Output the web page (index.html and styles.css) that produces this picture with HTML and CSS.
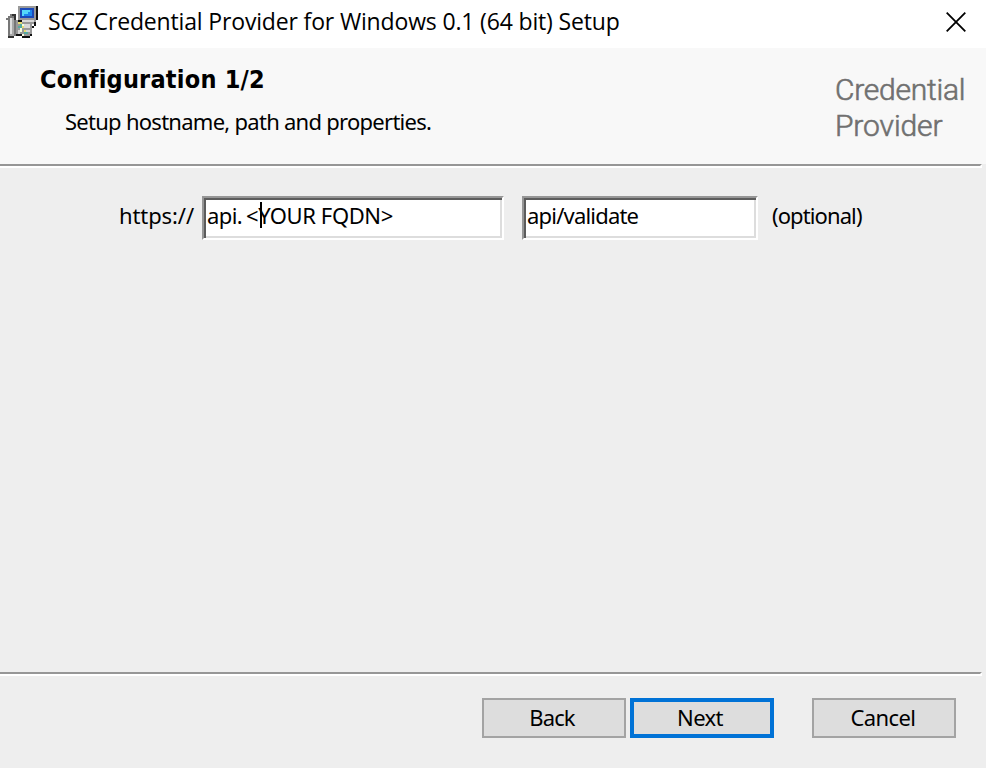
FILE: index.html
```html
<!DOCTYPE html>
<html lang="en">
<head>
<meta charset="utf-8">
<title>SCZ Credential Provider Setup</title>
<link rel="stylesheet" href="styles.css">
</head>
<body>
<div class="window">
  <div class="titlebar">
    <svg class="app-icon" width="32" height="32" viewBox="0 0 16 16" shape-rendering="crispEdges">
      <path fill="#777" d="M0 6h1v1H0zM1 5h4v1H1zM2 4h3v1H2zM1 6h1v9H1z"/>
      <path fill="#a8a8a8" d="M2 6h2v9H2z"/>
      <path fill="#ddd" d="M2 6h1v8H2z"/>
      <path fill="#333" d="M4 5h1v2H4zM1 15h3v1H1zM3 4h2v1H3z"/>
      <path fill="#777" d="M4 7h1v8H4z"/>
      <path fill="#999" d="M5 7h10v2H5zM5 9h8v5H5zM6 14h6v1H6z"/>
      <path fill="#d8d8d8" d="M8 7h6v1H8zM9 9h3v2H9zM6 12h1v2H6zM10 12h2v1h-2z"/>
      <path fill="#999" d="M6 0h9v7H6z"/>
      <path fill="#111" d="M15 0h1v7h-1zM6 7h2v1H6zM14 8h1v2h-1zM13 10h1v1h-1zM12 14h1v1h-1zM8 15h4v1H8zM5 14h3v1H5z"/>
      <path fill="#1c49b8" d="M7 1h7v5H7z"/>
      <path fill="#1c86ee" d="M8 2h5v3H8z"/>
      <path fill="#55d9fa" d="M8 2h4v1H8zM8 3h3v1H8zM8 4h1v1H8z"/>
      <path fill="#e7dc70" d="M6 8h2v1H6zM8 10h1v1H8zM9 12h1v1H9z"/>
      <path fill="#55aaa0" d="M7 9h1v2H7zM6 10h1v1H6zM9 13h2v1H9z"/>
      <path fill="#f8ffe1" d="M8 9h1v1H8zM7 11h1v2H7zM8 14h1v1H8z"/>
    </svg>
    <span class="title">SCZ Credential Provider for Windows 0.1 (64 bit) Setup</span>
    <svg class="close" width="20" height="20" viewBox="0 0 20 20"><path d="M.7.7l18.6 18.6M19.3.7L.7 19.3" fill="none" stroke="#000" stroke-width="1.8"/></svg>
  </div>
  <header class="header">
    <div class="heading">
      <h1>Configuration 1/2</h1>
      <p>Setup hostname, path and properties.</p>
    </div>
    <div class="brand"><div class="brand-first">Credential</div><div class="brand-second">Provider</div></div>
  </header>
  <div class="rule"></div>
  <main class="content">
    <span class="scheme">https://</span>
    <div class="field host"><span class="api">api.</span><span class="fqdn">&lt;YOUR FQDN&gt;</span><i class="caret"></i></div>
    <div class="field path"><span>api/validate</span></div>
    <span class="optional">(optional)</span>
  </main>
  <div class="rule"></div>
  <footer class="footer">
    <button class="btn back">Back</button>
    <button class="btn next">Next</button>
    <button class="btn cancel">Cancel</button>
  </footer>
</div>
</body>
</html>
```
FILE: styles.css
```css
* { box-sizing: border-box; }
body { margin: 0; font: 22px/28px "Noto Sans", sans-serif; color: #000; }
.window { width: 986px; height: 768px; display: flex; flex-direction: column; background: #eee; white-space: nowrap; overflow: hidden; }
.titlebar { height: 48px; flex: none; display: flex; align-items: flex-start; padding: 6px 20px 0 6px; background: #fff; }
.app-icon { flex: none; }
.title { margin: 0 0 0 10px; font: 23px/30px "Open Sans", sans-serif; letter-spacing: -0.16px; }
.close { margin: 6px 0 0 auto; }
.header { height: 116px; flex: none; display: flex; justify-content: space-between; padding: 16px 20px 0 40px; background: #f8f8f8; }
h1 { margin: 0; font: bold 25px/32px "DejaVu Sans Condensed", "DejaVu Sans", sans-serif; font-stretch: condensed; letter-spacing: 0.22px; }
p { margin: 11px 0 0 25px; letter-spacing: -0.73px; }
.brand { width: 131px; padding-top: 8px; font: 300 30px/36px Roboto, "Open Sans", sans-serif; color: #707070; -webkit-text-stroke: 0.6px #707070; }
.brand-first { letter-spacing: -0.25px; }
.brand-second { letter-spacing: -0.1px; }
.rule { height: 4px; flex: none; width: 982px; border: solid; border-width: 2px 2px 2px 0; border-color: #969696 #fff #fff; }
.content { flex: 1; display: flex; align-items: flex-start; padding: 28px 0 0 119px; }
.scheme { width: 83px; padding-top: 5px; letter-spacing: -0.1px; }
.field { position: relative; height: 44px; padding: 3px 3px; background: #fff; border: 2px solid; border-color: #969696 #fff #fff #969696; box-shadow: inset 2px 2px #5c5c5c, inset -2px -2px #ddd; }
.host { width: 302px; display: flex; }
.api { width: 39px; letter-spacing: -0.6px; }
.fqdn { letter-spacing: -0.4px; }
.path { width: 236px; margin-left: 18px; letter-spacing: -0.8px; }
.caret { position: absolute; left: 56px; top: 4px; width: 2px; height: 26px; background: #000; }
.optional { margin: 5px 0 0 14px; letter-spacing: -0.9px; }
.footer { height: 92px; flex: none; display: flex; padding: 22px 0 0 482px; }
.btn { width: 144px; height: 40px; padding: 0 4px 2px 0; font: inherit; line-height: 28px; letter-spacing: -0.6px; color: #000; background: #ddd; border: 2px solid #a3a3a3; border-radius: 0; }
.back { letter-spacing: -0.9px; }
.next { margin-left: 4px; border: 4px solid #0072d6; }
.cancel { margin-left: 38px; padding-right: 2px; }
```
